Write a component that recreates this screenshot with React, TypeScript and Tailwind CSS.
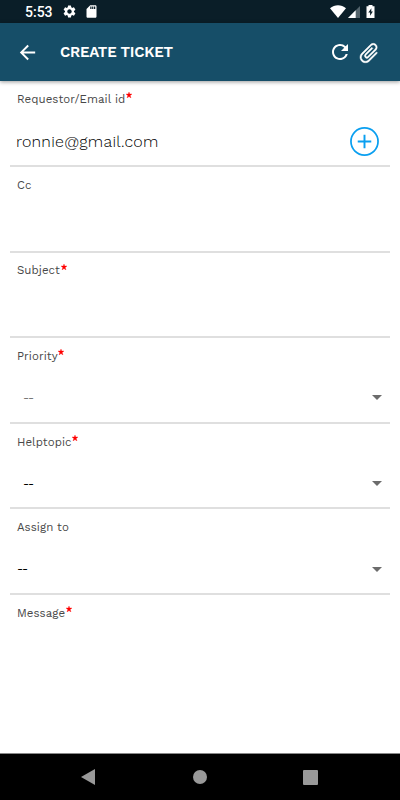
import React from 'react';
import { MdArrowBack, MdRefresh, MdSdCard, MdSettings } from 'react-icons/md';
import { clsx } from 'clsx';

const StatusBar = () => (
  <div className="flex h-[23px] shrink-0 items-center bg-[#0a1e28] pl-[25px] pr-[24px] text-white">
    <span className="w-[27px] whitespace-nowrap pt-px font-[Roboto] text-[14px] font-medium leading-none">5:53</span>
    <MdSettings size={15} className="ml-[10px]" />
    <MdSdCard size={15} className="ml-[7px]" />
    <div className="ml-auto flex items-center">
      <svg width="16" height="13" viewBox="0 0 16 13">
        <path d="M0 3.2C4.6-.8 11.4-.8 16 3.2L8 13z" fill="currentColor" />
      </svg>
      <svg width="12" height="12" viewBox="0 0 12 12" className="ml-[2px]">
        <path d="M12 0v12H0z" fill="#53636b" />
        <path d="M7.7 4.3V12H0z" fill="currentColor" />
      </svg>
      <svg width="9" height="13" viewBox="0 0 9 13" className="ml-[6px] mr-px">
        <path d="M2.5 0h4v1.3H8.5V13H.5V1.3h2z" fill="currentColor" />
        <path d="M5.4 3.2 2.3 7.6h1.8v3.2l2.8-4.4H5.2z" fill="#0a1e28" />
      </svg>
    </div>
  </div>
);

const PaperclipIcon = ({ className }: { className?: string }) => (
  <svg width="24" height="24" viewBox="0 0 24 24" className={className}>
    <path
      d="M16.5 6v11.5c0 2.21-1.79 4-4 4s-4-1.79-4-4V5a2.5 2.5 0 0 1 5 0v10.5c0 .55-.45 1-1 1s-1-.45-1-1V6H10v9.5a2.5 2.5 0 0 0 5 0V5c0-2.21-1.79-4-4-4S7 2.79 7 5v12.5c0 3.04 2.46 5.5 5.5 5.5s5.5-2.46 5.5-5.5V6h-1.5z"
      fill="currentColor"
      stroke="currentColor"
      strokeWidth="0.4"
    />
  </svg>
);

const Header = () => (
  <header className="relative z-10 flex h-[58px] shrink-0 items-center bg-[#164e68] pl-[16px] pr-[19px] text-white shadow-[0_1px_4px_rgba(0,0,0,0.4)]">
    <MdArrowBack size={23} />
    <h1 className="ml-[21px] whitespace-nowrap text-[15px] font-semibold tracking-[-0.22px]">CREATE TICKET</h1>
    <MdRefresh size={24} className="ml-auto" />
    <PaperclipIcon className="ml-[5px] mt-[2px] rotate-[45deg]" />
  </header>
);

type FieldProps = {
  label: string;
  required?: boolean;
  last?: boolean;
  children?: React.ReactNode;
};

const Field = ({ label, required, last, children }: FieldProps) => (
  <div className={clsx('mx-[10px] flex h-[85.6px] shrink-0 flex-col', !last && 'border-b-2 border-[#dfdfdf]')}>
    <div className="flex h-[37px] items-center pl-[7px] text-[11.5px] tracking-[0.06px] text-[#484848]">
      <span>{label}</span>
      {required && (
        <svg width="6" height="6" viewBox="0 0 6 6" className="mb-[9px] ml-[0.5px]">
          <path d="M3 0 3.7 2 6 2 4.2 3.5 5 6 3 4.6 1 6 1.8 3.5 0 2 2.3 2z" fill="#f00" stroke="#f00" strokeWidth="0.3" />
        </svg>
      )}
    </div>
    <div className="flex flex-1 items-center pb-px">{children}</div>
  </div>
);

const Select = ({ className }: { className: string }) => (
  <div className="flex w-full items-center justify-between pr-[8px]">
    <span className={clsx('text-[12px] leading-none tracking-[-1px]', className)}>--</span>
    <svg width="10" height="5" viewBox="0 0 10 5">
      <path d="M0 0h10L5 5z" fill="#6c6c6c" />
    </svg>
  </div>
);

const NavBar = () => (
  <div className="flex h-[47px] shrink-0 items-center justify-between border-t border-[#888] bg-black pl-[81px] pr-[82px]">
    <svg width="14" height="16" viewBox="0 0 14 16">
      <path d="M14 0v16L0 8z" fill="#999" />
    </svg>
    <div className="ml-px size-[14px] rounded-full bg-[#999]" />
    <div className="size-[15px] rounded-[1px] bg-[#999]" />
  </div>
);

export default function App() {
  return (
    <div className="flex h-[800px] w-[400px] flex-col overflow-hidden bg-white font-['Work_Sans',Inter,sans-serif]">
      <StatusBar />
      <Header />
      <main className="flex flex-1 flex-col overflow-hidden pt-[0.4px]">
        <Field label="Requestor/Email id" required>
          <span className="pl-[6px] pt-px text-[16px] font-[350] tracking-[0.25px] text-black">ronnie@gmail.com</span>
          <svg width="29" height="29" viewBox="0 0 30 30" className="ml-auto mr-[11px]" fill="none" stroke="#0a9ff0">
            <circle cx="15" cy="15" r="14" strokeWidth="1.8" />
            <path d="M15 8v14M8 15h14" strokeWidth="2" />
          </svg>
        </Field>
        <Field label="Cc" />
        <Field label="Subject" required />
        <Field label="Priority" required>
          <Select className="pl-[13px] text-[#777]" />
        </Field>
        <Field label="Helptopic" required>
          <Select className="pl-[13px] text-black" />
        </Field>
        <Field label="Assign to">
          <Select className="pl-[7px] text-black" />
        </Field>
        <Field label="Message" required last />
      </main>
      <NavBar />
    </div>
  );
}
